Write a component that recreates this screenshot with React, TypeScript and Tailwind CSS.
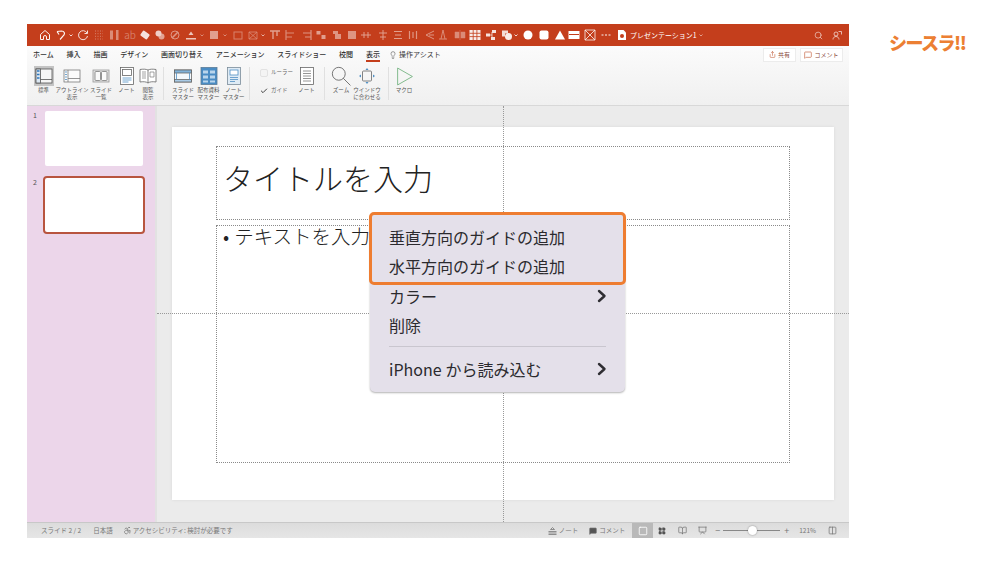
import React from 'react';
import {
  Search, Share, MessageSquare, Lightbulb, Check, Accessibility, Square, Columns2, Presentation,
  LayoutGrid, BookOpen,
} from 'lucide-react';

const jp = "font-['Noto_Sans_CJK_JP','Noto_Sans',sans-serif]";

const tabs = ['ホーム', '挿入', '描画', 'デザイン', '画面切り替え', 'アニメーション', 'スライドショー', '校閲', '表示'];

// title bar toolbar: kind, distance from previous centre, opacity
const qat: [string, number, number][] = [
  ['home', 0, 0.95],
  ['undo', 16, 0.95],
  ['chev', 10, 0.8],
  ['redo', 12, 0.85],
  ['dots', 15.5, 0.35],
  ['cols', 15.5, 0.4],
  ['ab', 16, 0.4],
  ['tag', 15, 0.85],
  ['tags', 15, 0.75],
  ['ban', 15, 0.45],
  ['under', 16, 0.7],
  ['chev', 11, 0.4],
  ['fillsq', 12, 0.5],
  ['chev', 11, 0.4],
  ['sq', 13, 0.35],
  ['sqx', 15, 0.4],
  ['chev', 10, 0.6],
  ['alT', 12, 0.5],
  ['alL', 15, 0.4],
  ['alR', 17, 0.45],
  ['pair', 14, 0.5],
  ['pair2', 16, 0.45],
  ['fillsq', 15, 0.45],
  ['cross', 14, 0.5],
  ['cross2', 17, 0.5],
  ['cross3', 15, 0.5],
  ['cross4', 15, 0.45],
  ['arrowL', 17, 0.45],
  ['tri', 13, 0.4],
  ['book', 17, 0.4],
  ['table', 15, 0.9],
  ['share', 16, 0.85],
  ['shapes', 16, 0.9],
  ['chev', 9, 0.8],
  ['circle', 12, 1],
  ['rsq', 16, 1],
  ['triFill', 16, 1],
  ['bar', 14, 1],
  ['boxx', 16, 0.95],
  ['more', 16, 0.95],
  ['doc', 16, 1],
];

function QIcon({ kind }: { kind: string }) {
  const p = { fill: 'none', stroke: 'white', strokeWidth: 1 };
  let c: React.ReactNode = null;
  switch (kind) {
    case 'home':
      c = <path d="M1.500 5.500L6 1.500l4.500 4v5H7.500V8a1.500 1.500 0 0 0-3 0v2.500h-3z" {...p} />;
      break;
    case 'undo':
      c = <path d="M2 2.500l4.500-.5c3 0 3.500 2.500 2.500 4L5 10.500M2 2.500l2 3" {...p} strokeWidth={1.200} />;
      break;
    case 'chev':
      c = <path d="M4.500 5.500L6 7l1.500-1.500" {...p} />;
      break;
    case 'redo':
      c = <path d="M10 4a4.500 4.500 0 1 0 .5 3M10.500 1.500V4.500H7.500" {...p} />;
      break;
    case 'dots':
      c = <path d="M2 2h8M2 4.700h8M2 7.300h8M2 10h8" {...p} strokeDasharray="1 1.500" />;
      break;
    case 'cols':
      c = <path d="M2 1.500h3v9H2zM8 1h2.500v10H8z" fill="white" />;
      break;
    case 'tag':
      c = <rect x="2" y="3" width="8" height="6" rx="1" transform="rotate(35 6 6)" fill="white" />;
      break;
    case 'tags':
      c = (
        <>
          <circle cx="4.500" cy="4.500" r="3" fill="white" />
          <circle cx="7.500" cy="7.500" r="3" fill="white" opacity="0.7" />
        </>
      );
      break;
    case 'ban':
      c = (
        <>
          <circle cx="6" cy="6" r="4" {...p} />
          <path d="M3 9l6-6" {...p} strokeWidth={1.600} />
        </>
      );
      break;
    case 'under':
      c = <path d="M3.500 6L6 2.500 8.500 6zM1 9h10v1.500H1z" fill="white" />;
      break;
    case 'fillsq':
      c = <rect x="2" y="2" width="8" height="8" fill="white" />;
      break;
    case 'sq':
      c = <rect x="2" y="3" width="8" height="7" {...p} />;
      break;
    case 'sqx':
      c = <path d="M2 3h8v7H2zM2 3l8 7M10 3l-8 7" {...p} strokeWidth={0.800} />;
      break;
    case 'alT':
      c = <path d="M1 2h10M4 2v8M8 2v5" {...p} strokeWidth={1.400} />;
      break;
    case 'alL':
      c = <path d="M2 1v10M2 4h8M2 8h6" {...p} strokeWidth={1.200} />;
      break;
    case 'alR':
      c = <path d="M10 1v10M10 4H2M10 8H4" {...p} strokeWidth={1.200} />;
      break;
    case 'pair':
      c = <path d="M1.500 2h4v3.500h-4zM6.500 6h4v4h-4z" fill="white" />;
      break;
    case 'pair2':
      c = <path d="M2 2h5v3H2zM4 5h6v5H4z" fill="white" />;
      break;
    case 'cross':
      c = <path d="M1 6h10M4 3v6M8 3v6" {...p} />;
      break;
    case 'cross2':
      c = <path d="M6 1v10M2 4h8M3 8h6" {...p} />;
      break;
    case 'cross3':
      c = <path d="M2 2.500h8M3 6h6M2 9.500h8" {...p} strokeWidth={1.200} />;
      break;
    case 'cross4':
      c = <path d="M2.500 2v8M6 3v6M9.500 2v8" {...p} strokeWidth={1.200} />;
      break;
    case 'arrowL':
      c = <path d="M2 6l8-4M2 6l8 4M5 6h5" {...p} />;
      break;
    case 'tri':
      c = <path d="M6 1L4 10M6 1l2 9M2 10h8" {...p} />;
      break;
    case 'book':
      c = <path d="M1 3h4v6H1zM7 3h4v6H7zM6 1v10" fill="white" stroke="white" strokeWidth={0.500} />;
      break;
    case 'table':
      c = (
        <>
          <rect x="0.500" y="1" width="11" height="10" fill="white" />
          <path d="M0.500 4.300h11M0.500 7.600h11M4.200 1v10M7.900 1v10" stroke="#c43e1c" strokeWidth={0.800} />
        </>
      );
      break;
    case 'share':
      c = (
        <>
          <rect x="7" y="1" width="4" height="3" fill="white" />
          <rect x="1" y="4.500" width="4" height="3" fill="white" />
          <rect x="6" y="8" width="4" height="3" fill="white" />
          <path d="M3 6h4M7 3v6" {...p} strokeWidth={0.800} />
        </>
      );
      break;
    case 'shapes':
      c = (
        <>
          <path d="M1 1.500h6v3H4v3H1z" fill="white" opacity="0.9" />
          <circle cx="7.500" cy="7.500" r="3.500" fill="white" />
        </>
      );
      break;
    case 'circle':
      c = <circle cx="6" cy="6" r="4.500" fill="white" />;
      break;
    case 'rsq':
      c = <rect x="1.500" y="1.500" width="9" height="9" rx="2" fill="white" />;
      break;
    case 'triFill':
      c = <path d="M6 1.500l5 9H1z" fill="white" />;
      break;
    case 'bar':
      c = (
        <>
          <rect x="0.500" y="2" width="11" height="8" fill="white" />
          <path d="M1 5.500h10" stroke="#c43e1c" />
        </>
      );
      break;
    case 'boxx':
      c = <path d="M1 1h10v10H1zM1 1l10 10M11 1L1 11" {...p} strokeWidth={0.800} />;
      break;
    case 'more':
      c = <path d="M1.500 6h2M5 6h2M8.500 6h2" {...p} />;
      break;
    case 'doc':
      c = (
        <>
          <path d="M2 1h5.500L10 3.500V11H2z" fill="white" />
          <circle cx="6" cy="7" r="2" fill="#c43e1c" />
        </>
      );
      break;
  }
  return (
    <svg width="12" height="12" viewBox="0 0 12 12">
      {c}
    </svg>
  );
}

function RibbonLabel({ lines, w }: { lines: string[]; w: number }) {
  return (
    <div className="flex flex-col items-center text-[5.5px] leading-[7px] text-[#555] whitespace-nowrap" style={{ width: w }}>
      {lines.map((l) => (
        <span key={l}>{l}</span>
      ))}
    </div>
  );
}

function RibbonItem({ w, lines, children, active }: { w: number; lines: string[]; children: React.ReactNode; active?: boolean }) {
  return (
    <div className="flex flex-col items-center shrink-0" style={{ width: w }}>
      <div className={`flex items-center justify-center w-[20px] h-[20px] ${active ? 'bg-[#c4c4c4]' : ''}`}>{children}</div>
      <div className="mt-[1px]">
        <RibbonLabel lines={lines} w={w} />
      </div>
    </div>
  );
}

function Sep() {
  return <div className="w-px h-[33px] bg-[#e0e0e0] shrink-0 mt-[1px]" />;
}

function SlideIcon({ kind, size = 18 }: { kind: string; size?: number }) {
  const s = '#7b7b7b';
  const b = '#4f8fc4';
  return (
    <svg width={size} height={size} viewBox="0 0 18 18" fill="none" stroke={s} strokeWidth="0.8">
      {kind === 'normal' && (
        <>
          <rect x="1" y="2" width="16" height="14" fill="#f6f6f6" stroke="#555" />
          <rect x="1" y="2" width="4.500" height="14" fill="#dbe7f2" stroke="#555" />
          <path d="M2 4h2.500M2 7.500h2.500M2 11h2.500" stroke="#2f77bd" strokeWidth="1.600" />
          <path d="M5.500 12.500H17" stroke="#555" />
        </>
      )}
      {kind === 'outline' && (
        <>
          <rect x="1" y="3" width="16" height="12" fill="#fbfbfb" />
          <path d="M5 3v12M5 11.500h12" />
          <path d="M2 5h2M2 7.500h2M2 10h2M2 12.500h2" stroke={b} />
        </>
      )}
      {kind === 'sorter' && (
        <>
          <rect x="1" y="3" width="16" height="12" fill="#e4e4e4" stroke="#999" />
          <rect x="3" y="4.500" width="5.500" height="9" rx="1" fill="#fafafa" />
          <rect x="9.500" y="4.500" width="5.500" height="9" rx="1" fill="#fafafa" />
        </>
      )}
      {kind === 'note' && (
        <>
          <rect x="2.500" y="0.500" width="13" height="17" fill="#fff" stroke="#666" />
          <rect x="4.500" y="2.500" width="9" height="6" stroke="#666" />
          <path d="M4.500 11h9M4.500 13h9M4.500 15h6" stroke={b} />
        </>
      )}
      {kind === 'read' && (
        <>
          <path d="M9 3C7 2 4 2 1 2.500V15c3-.5 6-.5 8 1 2-1.500 5-1.500 8-1V2.500C14 2 11 2 9 3zM9 3v13" fill="#fff" stroke="#666" />
          <path d="M3 5h4M3 7h4M3 9h4M3 11h4M11 5h4v5h-4z" strokeWidth="0.7" />
        </>
      )}
      {kind === 'smaster' && (
        <>
          <rect x="0.500" y="3" width="17" height="12" fill="#f4f8fb" stroke="#666" />
          <rect x="0.500" y="3" width="17" height="3" fill="#7fb1d8" stroke="#666" />
          <rect x="0.500" y="12.500" width="17" height="2.500" fill="#a9cbe6" stroke="#666" />
          <path d="M2.500 6v6.500M15.500 6v6.500" stroke={b} />
        </>
      )}
      {kind === 'hmaster' && (
        <>
          <rect x="1" y="0.500" width="16" height="17" fill="#4a8cc4" stroke="#5b7c97" />
          <path d="M3 3.500h5v3H3zM10 3.500h5v3h-5zM3 8.500h5v3H3zM10 8.500h5v3h-5zM3 13.500h5v2H3zM10 13.500h5v2h-5z" fill="#b9d5ec" stroke="none" />
        </>
      )}
      {kind === 'nmaster' && (
        <>
          <rect x="2.500" y="0.500" width="13" height="17" fill="#dfebf5" stroke="#7a8c9a" />
          <rect x="5" y="3" width="8" height="5" fill="#fff" stroke={b} />
          <path d="M5 10.500h8M5 12.500h8M5 14.500h5" stroke={b} />
        </>
      )}
      {kind === 'lines' && (
        <>
          <rect x="2.500" y="0.500" width="13" height="17" fill="#fff" stroke="#666" />
          <path d="M5 4h8M5 6.500h8M5 9h8M5 11.500h8M5 14h8" />
        </>
      )}
      {kind === 'zoom' && (
        <>
          <circle cx="7" cy="7" r="5.800" stroke="#666" />
          <path d="M11 11l6.500 6.500" stroke="#666" />
        </>
      )}
      {kind === 'fit' && (
        <>
          <rect x="4.500" y="4" width="9" height="10" rx="1" stroke="#666" />
          <path d="M9 1l1.500 2h-3zM9 17l1.500-2h-3zM1 9l2-1.500v3zM17 9l-2-1.500v3z" fill={b} stroke="none" />
        </>
      )}
      {kind === 'macro' && <path d="M2.500 1L16.500 9 2.500 17z" stroke="#6db07a" strokeWidth="0.8" />}
    </svg>
  );
}

function Chevron() {
  return (
    <svg width="12" height="14" viewBox="0 0 12 14" fill="none" stroke="#2f2e33" strokeWidth="2.400" strokeLinecap="round" strokeLinejoin="round">
      <path d="M3 2l5.500 5L3 12" />
    </svg>
  );
}

function MenuRow({ children, arrow }: { children: React.ReactNode; arrow?: boolean }) {
  return (
    <div className="flex items-center justify-between h-[29.500px] pl-[19px] pr-[17px] text-[16px] text-[#2b2a2e]">
      <span className="whitespace-nowrap">{children}</span>
      {arrow && <Chevron />}
    </div>
  );
}

export default function App() {
  return (
    <div className={`relative w-[1001px] h-[563px] bg-white overflow-hidden flex pt-[24px] pl-[27px] ${jp}`}>
      <div className="flex flex-col w-[822px] h-[514px] relative">
        {/* title bar */}
        <div className="flex items-center h-[22px] bg-[#c43e1c] text-white shrink-0 pl-[12px]">
          {qat.map(([kind, dx, op], i) => (
            <div
              key={i}
              className="flex items-center justify-center shrink-0 w-[12px]"
              style={{ marginLeft: i === 0 ? 0 : dx - 12, opacity: op }}
            >
              {kind === 'ab' ? <span className="text-[10px] leading-none font-light">ab</span> : <QIcon kind={kind} />}
            </div>
          ))}
          <span className="text-[7px] ml-[2px] whitespace-nowrap">プレゼンテーション1</span>
          <div className="opacity-50 ml-[-2px]">
            <QIcon kind="chev" />
          </div>
          <div className="ml-auto flex items-center gap-[9px] pr-[7px]">
            <Search className="w-[9px] h-[9px] opacity-70" />
            <div className="opacity-80 text-[9px] leading-none">
              <svg width="10" height="10" viewBox="0 0 10 10" fill="none" stroke="white" strokeWidth="0.8">
                <circle cx="4" cy="4" r="2" />
                <path d="M1 9.500c0-2 1.500-3 3-3s3 1 3 3M6.500 1.500H9.500V4.500" />
              </svg>
            </div>
          </div>
        </div>

        {/* ribbon */}
        <div className="h-[60px] shrink-0 bg-gradient-to-b from-[#fbfbfb] to-[#f0f0f0] border-b border-[#d8d8d8] relative">
          <div className="flex items-center h-[17px] pl-[6px] text-[7px] text-[#333]">
            <div className="flex gap-[12.800px]">
              {tabs.map((t) => (
                <span key={t} className="whitespace-nowrap font-medium relative">
                  {t}
                  {t === '表示' && <span className="absolute left-0 right-0 top-[11px] h-[1.500px] bg-[#c43e1c]" />}
                </span>
              ))}
            </div>
            <Lightbulb className="w-[8px] h-[8px] ml-[9px] text-[#666]" />
            <span className="ml-[2px] whitespace-nowrap">操作アシスト</span>
            <div className="ml-auto flex items-center gap-[4px] pr-[6px] text-[6px] text-[#8a4a3a]">
              <div className="flex items-center justify-center gap-[2px] bg-white border border-[#ececec] h-[14px] w-[33px]">
                <Share className="w-[7px] h-[7px] text-[#c4623f]" />
                <span>共有</span>
              </div>
              <div className="flex items-center justify-center gap-[2px] bg-white border border-[#ececec] h-[14px] w-[43px]">
                <MessageSquare className="w-[8px] h-[8px] text-[#c4623f]" />
                <span>コメント</span>
              </div>
            </div>
          </div>
          <div className="flex items-start pl-[3px] pt-[3px]">
            <RibbonItem w={27} lines={['標準']} active><SlideIcon kind="normal" /></RibbonItem>
            <RibbonItem w={30} lines={['アウトライン', '表示']}><SlideIcon kind="outline" /></RibbonItem>
            <RibbonItem w={28} lines={['スライド', '一覧']}><SlideIcon kind="sorter" /></RibbonItem>
            <RibbonItem w={23} lines={['ノート']}><SlideIcon kind="note" /></RibbonItem>
            <RibbonItem w={20} lines={['閲覧', '表示']}><SlideIcon kind="read" /></RibbonItem>
            <div className="w-[5px]" />
            <Sep />
            <div className="w-[6px]" />
            <RibbonItem w={26} lines={['スライド', 'マスター']}><SlideIcon kind="smaster" /></RibbonItem>
            <RibbonItem w={25} lines={['配布資料', 'マスター']}><SlideIcon kind="hmaster" /></RibbonItem>
            <RibbonItem w={25} lines={['ノート', 'マスター']}><SlideIcon kind="nmaster" /></RibbonItem>
            <div className="w-[3px]" />
            <Sep />
            <div className="flex flex-col w-[44px] pl-[10px] text-[5.5px] text-[#666] gap-[9px] pt-[2px]">
              <div className="flex items-center gap-[3px] h-[9px]">
                <span className="w-[8px] h-[8px] rounded-[2px] border border-[#e2e2e2] bg-[#f4f4f4]" />
                <span className="whitespace-nowrap">ルーラー</span>
              </div>
              <div className="flex items-center gap-[3px] h-[9px]">
                <Check className="w-[8px] h-[8px] text-[#444]" strokeWidth={3} />
                <span className="whitespace-nowrap">ガイド</span>
              </div>
            </div>
            <RibbonItem w={25} lines={['ノート']}><SlideIcon kind="lines" /></RibbonItem>
            <div className="w-[5px]" />
            <Sep />
            <div className="w-[2px]" />
            <RibbonItem w={28} lines={['ズーム']}><SlideIcon kind="zoom" size={20} /></RibbonItem>
            <RibbonItem w={24} lines={['ウインドウ', 'に合わせる']}><SlideIcon kind="fit" /></RibbonItem>
            <div className="w-[9px]" />
            <Sep />
            <div className="w-[3px]" />
            <RibbonItem w={24} lines={['マクロ']}><SlideIcon kind="macro" size={19} /></RibbonItem>
          </div>
        </div>

        {/* main */}
        <div className="flex flex-1 min-h-0 relative">
          <div className="w-[128px] bg-[#ecd6ea] shrink-0 pt-[5px] flex flex-col">
            <div className="flex items-start pl-[6px]">
              <span className="text-[7px] text-[#555] w-[12px] leading-[9px]">1</span>
              <div className="w-[98px] h-[55px] bg-white rounded-[2px]" />
            </div>
            <div className="flex items-start pl-[6px] mt-[10px]">
              <span className="text-[7px] text-[#555] w-[10px] leading-[9px] mt-[2px]">2</span>
              <div className="w-[102px] h-[58px] bg-white rounded-[4px] border-2 border-[#b8553f]" />
            </div>
          </div>
          <div className="w-[2px] bg-[#e2e2e2] shrink-0" />
          <div className="flex-1 bg-[#ebebeb] pl-[15px] pt-[21px] relative">
            <div className="w-[662px] h-[373px] bg-white pt-[19px] pl-[44px] shadow-[0_0_3px_rgba(0,0,0,0.08)]">
              <div className="w-[574px] h-[74px] border border-dotted border-[#8a8a8a] flex items-center pl-[6px] pb-[11px]">
                <span className="text-[30px] font-extralight text-[#222] whitespace-nowrap">タイトルを入力</span>
              </div>
              <div className="w-[574px] h-[238px] mt-[4.500px] border border-dotted border-[#8a8a8a] pl-[6px]">
                <div className="flex items-center text-[19.500px] font-light text-[#222] whitespace-nowrap leading-[20px]">
                  <span className="mr-[5px]">•</span>
                  <span>テキストを入力</span>
                </div>
              </div>
            </div>
            {/* guides */}
            <div className="absolute left-0 right-0 top-[207px] border-t border-dotted border-[#999]" />
            <div className="absolute top-0 bottom-0 left-[346px] border-l border-dotted border-[#999]" />
          </div>
        </div>

        {/* status bar */}
        <div className="h-[16px] shrink-0 bg-gradient-to-b from-[#dcdcdc] to-[#e6e6e6] border-t border-[#c8c8c8] flex items-center text-[6.500px] text-[#777] pl-[14px]">
          <span className="whitespace-nowrap">スライド 2 / 2</span>
          <span className="ml-[12px] whitespace-nowrap">日本語</span>
          <Accessibility className="w-[9px] h-[9px] ml-[10px]" />
          <span className="ml-[1px] whitespace-nowrap">アクセシビリティ: 検討が必要です</span>
          <div className="ml-auto flex items-center h-full">
            <svg width="9" height="8" viewBox="0 0 9 8" fill="none" stroke="#777" strokeWidth="0.8">
              <path d="M4.500 0.500L6.500 2.500H2.500zM0.500 4.500h8M0.500 6h8M0.500 7.500h8" />
            </svg>
            <span className="ml-[2px] whitespace-nowrap">ノート</span>
            <MessageSquare className="w-[8px] h-[8px] ml-[11px] fill-[#555]" />
            <span className="ml-[2px] whitespace-nowrap">コメント</span>
            <div className="w-[21px] h-full bg-[#b9b9b9] ml-[7px] flex items-center justify-center">
              <Square className="w-[10px] h-[10px] text-white" />
            </div>
            <LayoutGrid className="w-[8px] h-[8px] ml-[5px] fill-[#555] text-[#555]" />
            <BookOpen className="w-[9px] h-[9px] ml-[12px]" />
            <Presentation className="w-[9px] h-[9px] ml-[11px]" />
            <span className="ml-[8px] text-[9px] leading-none">−</span>
            <div className="relative w-[57px] h-[1px] bg-[#888] ml-[3px]">
              <span className="absolute left-[25px] top-[-4px] w-[9px] h-[9px] rounded-full bg-white shadow-[0_0_2px_rgba(0,0,0,0.4)]" />
            </div>
            <span className="ml-[4px] text-[9px] leading-none">+</span>
            <span className="ml-[10px] whitespace-nowrap">121%</span>
            <Columns2 className="w-[9px] h-[9px] ml-[12px] mr-[12px]" />
          </div>
        </div>

        {/* context menu */}
        <div className="absolute left-[343px] top-[189px] w-[255px] h-[179px] bg-[#e4e0ea] rounded-[5px] shadow-[0_1px_2px_rgba(0,0,0,0.3)] pt-[9px]">
          <MenuRow>垂直方向のガイドの追加</MenuRow>
          <MenuRow>水平方向のガイドの追加</MenuRow>
          <MenuRow arrow>カラー</MenuRow>
          <MenuRow>削除</MenuRow>
          <div className="mx-[19px] mt-[6px] mb-[7px] h-px bg-[#c9c6cf]" />
          <MenuRow arrow>
            iPhone<span className="ml-[4px]">から読み込む</span>
          </MenuRow>
          <div className="absolute left-[-1px] top-[-1px] w-[257px] h-[73px] rounded-[5px] border-[3px] border-[#ee7d31]" />
        </div>
      </div>

      {/* site logo */}
      <div className="ml-[40px] mt-[5px] text-[#ec7f33] font-black text-[18px] leading-[26px] tracking-[-1.500px] whitespace-nowrap">
        シースラ!!
      </div>
    </div>
  );
}
